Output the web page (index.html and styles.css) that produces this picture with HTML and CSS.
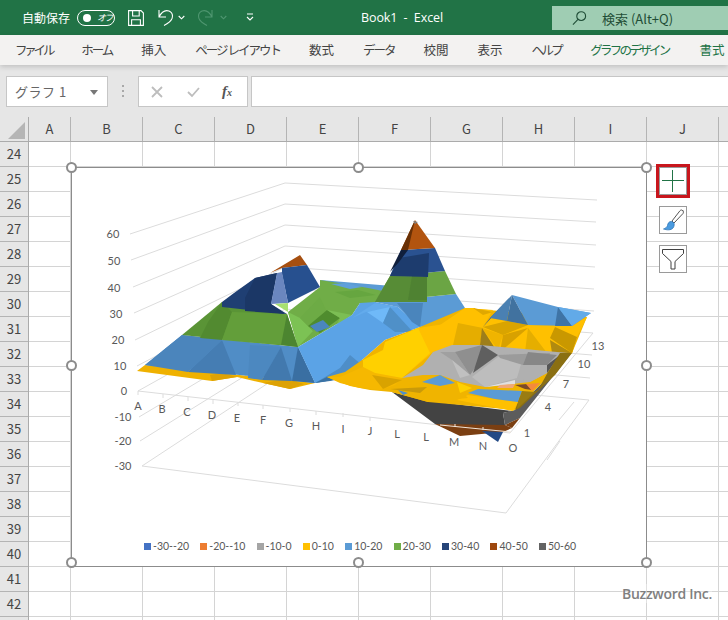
FILE: index.html
```html
<!DOCTYPE html>
<html lang="ja">
<head>
<meta charset="utf-8">
<title>Book1 - Excel</title>
<link rel="stylesheet" href="styles.css">
</head>
<body>
<div class="app">
  <header class="titlebar">
    <span class="autosave">自動保存</span>
    <span class="toggle"><i class="dot"></i><em>オフ</em></span>
    <svg class="qa save" viewBox="0 0 16 16"><path d="M.6.6h12.4l2.4 2.4v12.4H.6zM4.6.6v5.4h6.6V.6M3.6 15.4v-5.6h8.8v5.6"/></svg>
    <svg class="qa undo" viewBox="0 0 17 18"><path d="M2 1v7h7M2 8C5 2 9 1 12 2c3 1.400 4 4.500 3 7.500-1 2.500-4 5-8 7"/></svg>
    <svg class="chev" viewBox="0 0 7 5"><path d="M.7 1l2.800 2.800L6.300 1"/></svg>
    <svg class="qa redo" viewBox="0 0 17 18"><path d="M15 1v7H8M15 8C12 2 8 1 5 2 2 3.400 1 6.500 2 9.500c1 2.500 4 5 8 7"/></svg>
    <svg class="chev dim" viewBox="0 0 7 5"><path d="M.7 1l2.800 2.800L6.300 1"/></svg>
    <svg class="more" viewBox="0 0 8 9"><path d="M1 1h6M1 4l3 3 3-3"/></svg>
    <span class="doc">Book1&nbsp; - &nbsp;Excel</span>
    <div class="search">
      <svg class="lens" viewBox="0 0 16 16"><circle cx="9.800" cy="6" r="4.700"/><path d="M6.400 9.400L1 15"/></svg>
      <span>検索 (Alt+Q)</span>
    </div>
  </header>

  <nav class="tabs">
    <span class="tab k3">ファイル</span>
    <span class="tab k2">ホーム</span>
    <span class="tab">挿入</span>
    <span class="tab k2b">ページ レイアウト</span>
    <span class="tab">数式</span>
    <span class="tab k2">データ</span>
    <span class="tab">校閲</span>
    <span class="tab">表示</span>
    <span class="tab k2h">ヘルプ</span>
    <span class="tab chart-tab k2c">グラフのデザイン</span>
    <span class="tab chart-tab last">書式</span>
  </nav>

  <div class="formula">
    <div class="namebox"><span>グラフ 1</span><i class="caret"></i></div>
    <svg class="grip" viewBox="0 0 3 12"><path d="M0 0h2v2H0zM0 5h2v2H0zM0 10h2v2H0z"/></svg>
    <div class="fxbox">
      <svg class="fx-ic" viewBox="0 0 12 12"><path d="M1 1l10 10M11 1L1 11"/></svg>
      <svg class="fx-ic check" viewBox="0 0 13 12"><path d="M1 6l4 4 7-8"/></svg>
      <span class="fx"><b>f</b><small>x</small></span>
    </div>
    <div class="input"></div>
  </div>

  <div class="colhead">
    <div class="corner"><svg viewBox="0 0 18 17"><path d="M0 17L17 0v17z"/></svg></div>
    <span class="col a">A</span><span class="col">B</span><span class="col">C</span><span class="col">D</span><span class="col">E</span><span class="col">F</span><span class="col">G</span><span class="col">H</span><span class="col">I</span><span class="col">J</span><span class="col"></span>
  </div>

  <div class="body">
    <div class="rows">
      <span>24</span><span>25</span><span>26</span><span>27</span><span>28</span><span>29</span><span>30</span><span>31</span><span>32</span><span>33</span><span>34</span><span>35</span><span>36</span><span>37</span><span>38</span><span>39</span><span>40</span><span>41</span><span>42</span><span></span>
    </div>
    <div class="sheet">
      <div class="chart">
        <svg class="plot" viewBox="71 167 575 399">
          <g class="grid">
            <path d="M285 183L130 234M285 204L131 260M285 225L133 287M285 246L134 313M285 267L135 340M285 288L137 366M285 309L138 391M285 330L139 417M285 351L140 441M285 372L142 466"/>
            <path d="M285 183L597 200M285 204L596 222M285 225L596 245M285 246L595 267M285 267L594 289M285 288L594 311M285 309L593 333M285 330L592 355M285 351L590 378M285 372L589 400"/>
            <path d="M142 466L506 513L589 400M138 391L510 433L593 333M547 460L560 441M559 420L574 402"/>
            <path d="M138 391v4M163 394v4M188 397v4M213 400v4M238 402v4M263 405v4M290 408v4M316 411v4M343 413v4M370 417v4"/>
          </g>
          <g class="surface">
            <!-- back plateau -->
            <polygon fill="#5B9BD5" points="320,280 392,286 386,296 340,292"/>
            <polygon fill="#70AD47" points="288,312 320,287 320,280 345,284 368,288 388,292 375,303 360,303 352,315 298,347"/>
            <polygon fill="#5FA0DC" points="331,284 346,283 362,287 350,289"/>
            <polygon fill="#66A640" points="335,292 358,290 376,295 350,298"/>
            <polygon fill="#7CC254" points="288,312 298,347 313,331 300,318"/>
            <polygon fill="#6DAB45" points="300,318 313,331 326,310 320,297"/>
            <polygon fill="#4F8C2E" points="308,326 327,310 340,318 320,333"/>
            <polygon fill="#7CBE54" points="327,310 352,315 336,326 340,318"/>
            <polygon fill="#4A86BE" points="310,326 323,320 330,327 317,332"/>
            <!-- left slope -->
            <polygon fill="#EFB100" points="137,371 145,365 315,383 290,389 263,383 237,377 212,381"/>
            <polygon fill="#DDA205" points="212,381 237,377 222,373 210,375"/>
            <polygon fill="#DDA205" points="263,383 290,389 304,384 287,379"/>
            <polygon fill="#508DC6" points="145,365 182,335 298,347 315,383"/>
            <polygon fill="#457DB3" points="188,372 222,340 236,375"/>
            <polygon fill="#4B85BC" points="182,335 222,340 188,372 145,365"/>
            <polygon fill="#4C88C0" points="248,378 250,345 281,347 262,380"/>
            <polygon fill="#4279AE" points="262,380 281,347 292,381"/>
            <polygon fill="#3A6FA2" points="292,381 298,347 315,383"/>
            <polygon fill="#5A9436" points="182,335 222,302 287,314 298,347"/>
            <polygon fill="#528A30" points="200,338 208,322 222,302 232,312 222,340"/>
            <polygon fill="#4C8530" points="276,344 287,314 298,347"/>
            <polygon fill="#639E3A" points="222,340 232,312 287,314 281,345"/>
            <!-- left hill -->
            <polygon fill="#A64F10" points="270,273 300,255 307,265 282,268"/>
            <polygon fill="#27508F" points="282,274 282,268 307,265 320,287 288,303"/>
            <polygon fill="#1F3F73" points="222,302 234,293 255,278 277,273 271,304 287,314 222,307"/>
            <polygon fill="#1B3766" points="245,298 255,278 277,273 271,304 285,314 245,311"/>
            <polygon fill="#6A86BF" points="277,273 282,272 288,303 271,304"/>
            <polygon fill="#A8E070" points="275,304 288,303 288,312"/>
            <!-- big light blue -->
            <polygon fill="#5BA3E6" points="298,347 352,315 360,303 375,302 398,307 420,327 385,340 362,360 362,370 350,377 315,383"/>
            <polygon fill="#4E8EC8" points="315,383 325,377 340,368 350,355 362,365 350,377"/>
            <polygon fill="#63ABEC" points="352,318 375,303 398,307 366,312"/>
            <polygon fill="#6FB9F8" points="367,312 390,307 383,323"/>
            <polygon fill="#4F90C8" points="390,307 413,332 395,332 383,323"/>
            <polygon fill="#57A0E0" points="340,375 360,367 373,373 363,376"/>
            <polygon fill="#3A72A4" points="315,383 327,377 350,377 330,381"/>
            <!-- main peak -->
            <polygon fill="#5B9BD5" points="375,302 456,294 465,308 458,322 420,327 398,307"/>
            <polygon fill="#4A85BC" points="397,303 423,303 420,327 412,322"/>
            <polygon fill="#6BA544" points="390,276 445,271 456,294 375,302"/>
            <polygon fill="#578C36" points="390,276 427,277 427,302 375,302"/>
            <polygon fill="#4F8232" points="408,300 412,276 427,277 427,300"/>
            <polygon fill="#2A5291" points="401,250 435,248 445,271 390,276"/>
            <polygon fill="#1D3C6E" points="390,276 399,258 429,253 428,277"/>
            <polygon fill="#101F3C" points="390,272 401,250 408,250 399,262"/>
            <polygon fill="#B2540F" points="415,220 435,248 401,250"/>
            <polygon fill="#683006" points="415,220 401,250 408,250"/>
            <polygon fill="#808080" points="413,221 418,222 415,224"/>
            <!-- underside -->
            <polygon fill="#434343" points="392,392 430,401 513,411 503,413 505,425 458,425 435,424"/>
            <polygon fill="#7B3F12" points="435,424 505,425 512,428 503,432 460,436"/>
            <polygon fill="#5C5C5C" points="570,355 515,410 503,413 505,425 520,418"/>
            <polygon fill="#7A3F12" points="505,425 520,418 512,428"/>
            <polygon fill="#234A86" points="482,431 503,432 498,442"/>
            <!-- yellow base that the facets lie on -->
            <polygon fill="#F0B400" points="362,360 385,340 420,327 465,308 500,311 587,317 572,353 515,410 428,402 392,392 370,390 350,386 327,377 345,372"/>
            <!-- lower yellow and central plain -->
            <polygon fill="#F6B800" points="327,377 340,377 363,367 375,373 402,378 395,385 380,390 360,388 340,383"/>
            <polygon fill="#D9A300" points="372,375 383,389 402,380"/>
            <polygon fill="#FFC000" points="418,328 458,322 465,308 475,308 480,345 453,347 433,352 402,378"/>
            <polygon fill="#FFD000" points="363,360 383,350 385,342 418,328 430,353 402,378 375,373 363,367"/>
            <polygon fill="#FFC000" points="440,325 465,308 493,310 483,327 480,345 452,345 440,350"/>
            <polygon fill="#E5AD00" points="458,323 483,328 480,345 453,345"/>
            <polygon fill="#E0A800" points="473,308 493,312 483,315"/>
            <!-- right hill: yellow band -->
            <polygon fill="#FFC000" points="483,327 490,318 507,321 528,325 572,326 587,317 577,337 572,353 560,354 480,345"/>
            <polygon fill="#F0B400" points="482,328 503,335 498,350"/>
            <polygon fill="#9E7E1A" points="482,328 498,353 480,345"/>
            <polygon fill="#D9A400" points="507,321 528,325 503,335 483,327"/>
            <polygon fill="#D8A100" points="503,335 528,328 500,352"/>
            <polygon fill="#E5AE00" points="528,328 547,353 525,352"/>
            <polygon fill="#C99800" points="555,327 577,337 572,353 550,338"/>
            <polygon fill="#B08A10" points="550,340 572,353 552,353"/>
            <!-- right hill: blue cap -->
            <polygon fill="#5B9BD5" points="512,295 558,307 591,313 572,326 528,325"/>
            <polygon fill="#3A5F88" points="512,295 483,327 490,318"/>
            <polygon fill="#4A80B2" points="512,295 490,318 507,321"/>
            <polygon fill="#41729F" points="512,295 507,321 528,325"/>
            <polygon fill="#3F74A6" points="558,307 572,326 555,326"/>
            <polygon fill="#62AAE8" points="558,307 591,313 572,326"/>
            <!-- grey band -->
            <polygon fill="#B0B0B0" points="402,378 423,365 433,352 452,345 480,345 568,353 547,373 530,382 485,387 460,382 440,375 423,375"/>
            <polygon fill="#A0A0A0" points="440,352 455,352 470,375 452,360"/>
            <polygon fill="#8F8F8F" points="455,352 482,345 477,365 470,375"/>
            <polygon fill="#5F5F5F" points="482,345 498,355 473,373"/>
            <polygon fill="#C0C0C0" points="452,360 470,375 460,378"/>
            <polygon fill="#BDBDBD" points="498,357 523,357 517,378 485,387 472,377"/>
            <polygon fill="#9B9B9B" points="498,355 550,353 547,363 523,365 500,358"/>
            <polygon fill="#878787" points="528,352 557,355 547,365 523,365"/>
            <polygon fill="#B0B0B0" points="523,365 547,365 547,373 530,382 517,378"/>
            <polygon fill="#555555" points="547,365 560,355 547,373"/>
            <polygon fill="#E0E0E0" points="485,387 515,380 515,384"/>
            <polygon fill="#F0A878" points="500,385 515,384 513,388 497,388"/>
            <polygon fill="#7A4A2A" points="515,385 527,384 532,390 525,389"/>
            <polygon fill="#F58A3C" points="526,384 540,383 532,391"/>
            <!-- right edge and front pieces -->
            <polygon fill="#8A6F12" points="560,353 572,353 555,375 520,408 515,410 520,397 538,390 548,372"/>
            <polygon fill="#FFC000" points="457,400 468,395 518,402 513,411"/>
            <polygon fill="#5B9BD5" points="468,393 478,389 522,391 518,402 495,399"/>
            <polygon fill="#9A7C12" points="522,391 535,392 517,409 518,402"/>
            <polygon fill="#F0B400" points="393,388 420,383 457,387 468,398 428,402 392,392"/>
            <polygon fill="#C99A0A" points="390,389 427,387 420,393"/>
            <polygon fill="#5B9BD5" points="422,382 440,375 455,383 440,386"/>
            <polygon fill="#FFD000" points="457,382 472,388 460,393"/>
            <polygon fill="#4F8FCC" points="398,390 408,393 403,395"/>
          </g>
          <path class="axisline" d="M440 425L511 432M455 427v-3M483 430v-3"/>
          <g class="labels">
            <text x="113" y="238">60</text><text x="114" y="265">50</text><text x="114" y="292">40</text><text x="116" y="318">30</text><text x="118" y="344">20</text><text x="120" y="370">10</text><text x="124" y="395">0</text><text x="123" y="421">-10</text><text x="123" y="445">-20</text><text x="123" y="470">-30</text>
            <text x="138" y="410">A</text><text x="162" y="413">B</text><text x="187" y="416">C</text><text x="212" y="419">D</text><text x="237" y="422">E</text><text x="263" y="424">F</text><text x="289" y="427">G</text><text x="316" y="430">H</text><text x="343" y="433">I</text><text x="370" y="435">J</text><text x="397" y="438">L</text><text x="426" y="441">L</text><text x="454" y="446">M</text><text x="483" y="450">N</text><text x="513" y="452">O</text>
            <text x="527" y="437">1</text><text x="548" y="411">4</text><text x="566" y="388">7</text><text x="584" y="368">10</text><text x="598" y="350">13</text>
          </g>
        </svg>
        <ul class="legend">
          <li><i class="s1"></i>-30--20</li><li><i class="s2"></i>-20--10</li><li><i class="s3"></i>-10-0</li><li><i class="s4"></i>0-10</li><li><i class="s5"></i>10-20</li><li><i class="s6"></i>20-30</li><li><i class="s7"></i>30-40</li><li><i class="s8"></i>40-50</li><li><i class="s9"></i>50-60</li>
        </ul>
        <i class="handle h-tl"></i><i class="handle h-tc"></i><i class="handle h-tr"></i>
        <i class="handle h-ml"></i><i class="handle h-mr"></i>
        <i class="handle h-bl"></i><i class="handle h-bc"></i><i class="handle h-br"></i>
      </div>
      <div class="tools">
        <div class="tool plus"><svg viewBox="0 0 22 22"><path d="M0 10.500h22M10.500 0v22"/></svg></div>
        <div class="tool"><svg viewBox="0 0 24 24"><path class="brush-h" d="M21.500 2.500c-.8-.8-1.800-.6-2.500.2L11 13l2 2 9-9.500c.6-.8.600-2.200-.5-3.500z"/><path class="brush-b" d="M10.500 13.500c-3 0-3.500 2-4 4-.4 1.500-2 3-4 3.500 3 1 7.500 1.500 9.500-1 1.500-2 1.500-4.500.5-5.500z"/></svg></div>
        <div class="tool"><svg viewBox="0 0 24 24"><path class="funnel" d="M1.500 2.500h21v4l-8.500 8v7.500h-4v-7.500l-8.500-8z"/></svg></div>
      </div>
      <span class="mark">Buzzword Inc.</span>
    </div>
  </div>
</div>
</body>
</html>
```
FILE: styles.css
```css
*{box-sizing:border-box;margin:0;padding:0}
html,body{width:728px;height:620px;overflow:hidden;background:#fff}
body{font-family:"Noto Sans CJK JP","Noto Sans",sans-serif;color:#444}
.app{width:728px;height:620px;display:flex;flex-direction:column;overflow:hidden}

/* title bar */
.titlebar{height:35px;flex:none;background:#217346;color:#fff;display:flex;align-items:center;position:relative}
.autosave{font-size:12px;margin-left:22px;width:48px;white-space:nowrap;line-height:16px}
.toggle{width:38px;height:16px;margin-left:7px;border:1px solid #fff;border-radius:8px;display:flex;align-items:center;padding-left:5px;flex:none}
.dot{width:8px;height:8px;border-radius:50%;background:#fff;flex:none}
.toggle em{font-size:9px;margin-left:6px;letter-spacing:-1.500px;white-space:nowrap}
svg.qa{fill:none;stroke:#fff;stroke-width:1.100;flex:none}
.save{width:16px;height:16px;margin-left:13px}
.undo{width:17px;height:18px;margin-left:13px}
.chev{width:7px;height:5px;margin-left:4px;fill:none;stroke:#fff;stroke-width:1.100;flex:none}
.chev.dim{stroke:#4f9670;margin-left:6px}
svg.qa.redo{width:17px;height:18px;margin-left:12px;stroke:#4f9670}
.more{width:8px;height:9px;margin-left:19px;fill:none;stroke:#fff;stroke-width:1.100;flex:none}
.doc{font-family:"Open Sans","Noto Sans",sans-serif;font-size:12.500px;margin-left:107px;white-space:nowrap;letter-spacing:-.1px}
.search{position:absolute;left:552px;top:6px;width:176px;height:24px;background:#9fcdb3;color:#1f4d36;display:flex;align-items:center;font-size:13px;padding-left:20px}
.search span{margin-left:15px;font-family:"Noto Sans CJK JP",sans-serif;white-space:nowrap}
.lens{width:15px;height:16px;fill:none;stroke:#1f4d36;stroke-width:1.200;flex:none}

/* tabs */
.tabs{height:30px;flex:none;background:#f3f2f1;display:flex;align-items:center;gap:29px;padding-left:15px;font-size:12.500px;color:#444;white-space:nowrap;box-shadow:0 2px 5px rgba(0,0,0,.16);position:relative;z-index:1;overflow:hidden}
.tab{flex:none;line-height:18px}
.k3{letter-spacing:-3.200px}
.k2{letter-spacing:-2px}
.k2b{letter-spacing:-2px}
.k2h{letter-spacing:-2.600px}
.k2c{letter-spacing:-2.700px}
.last{margin-left:2px}
.chart-tab{color:#217346}

/* formula bar */
.formula{height:52px;flex:none;background:#e6e6e6;display:flex;align-items:flex-start;padding:11px 0 0 6px}
.namebox{width:102px;height:31px;background:#fff;border:1px solid #c6c6c6;display:flex;align-items:center;justify-content:space-between;padding:0 9px 0 8px;font-size:13px;color:#666;letter-spacing:.5px}
.caret{width:0;height:0;border:4px solid transparent;border-top:5px solid #777;margin-top:5px}
.grip{width:3px;height:12px;margin:9px 13px 0 14px;fill:#a8a8a8;flex:none}
.fxbox{width:110px;height:31px;background:#fff;border:1px solid #c6c6c6;display:flex;align-items:center;padding-left:12px;flex:none}
.fx-ic{width:12px;height:12px;fill:none;stroke:#bdbdbd;stroke-width:1.800;flex:none}
.fx-ic.check{width:13px;margin-left:24px}
.fx{font-family:"Liberation Serif",serif;font-style:italic;font-size:15px;margin-left:22px;color:#555;line-height:1}
.fx small{font-size:10px;font-weight:700}
.input{flex:1;height:31px;margin-left:3px;background:#fff;border:1px solid #c6c6c6;border-right:0}

/* column headings */
.colhead{height:25px;flex:none;display:flex;background:#e6e6e6;border-bottom:1px solid #ababab;position:relative}
.corner{width:29px;flex:none;border-right:1px solid #ababab;position:relative;display:flex;align-items:flex-end;justify-content:flex-end;padding:0 2px 2px 0}
.corner svg{width:18px;height:17px;fill:#b5b5b5}
.col{width:72px;flex:none;border-right:1px solid #b4b4b4;text-align:center;font-size:13px;line-height:24px;color:#444}
.col.a{width:42px}

/* body */
.body{flex:1;display:flex;min-height:0}
.rows{width:29px;flex:none;background:#e6e6e6;border-right:1px solid #ababab;display:flex;flex-direction:column}
.rows span{height:25px;flex:none;border-bottom:1px solid #b4b4b4;font-size:13px;line-height:23px;text-align:center;color:#444}
.sheet{flex:1;position:relative;background-color:#fff;background-image:linear-gradient(to right,#d4d4d4 1px,transparent 1px),linear-gradient(to bottom,#d4d4d4 1px,transparent 1px);background-size:72px 25px;background-position:41px 0,0 24px}

/* chart */
.chart{position:absolute;left:42px;top:25px;width:576px;height:400px;background:#fff;border:1px solid #8c8c8c}
.plot{position:absolute;left:-1px;top:-1px;width:575px;height:399px;display:block;overflow:visible}
.grid path{fill:none;stroke:#dcdcdc;stroke-width:1}
.axisline{fill:none;stroke:#f0e6dc;stroke-width:1}
.labels text{font-family:Lato,"Liberation Sans",sans-serif;font-size:11px;fill:#595959;text-anchor:middle}
.legend{position:absolute;left:72px;top:371px;display:flex;gap:11.200px;list-style:none;font-family:Lato,"Liberation Sans",sans-serif;font-size:10.500px;color:#595959;line-height:14px;white-space:nowrap}
.legend li{display:flex;align-items:center;gap:2px}
.legend i{width:7px;height:7px;flex:none}
.s1{background:#4472c4}.s2{background:#ed7d31}.s3{background:#a5a5a5}.s4{background:#ffc000}.s5{background:#5b9bd5}.s6{background:#70ad47}.s7{background:#264478}.s8{background:#9e480e}.s9{background:#636363}
.handle{position:absolute;width:11px;height:11px;border-radius:50%;background:#fff;border:2px solid #8c8c8c}
.h-tl{left:-6px;top:-6px}.h-tc{left:281px;top:-6px}.h-tr{left:569px;top:-6px}
.h-ml{left:-6px;top:192px}.h-mr{left:569px;top:192px}
.h-bl{left:-6px;top:389px}.h-bc{left:281px;top:389px}.h-br{left:569px;top:389px}

/* chart tools */
.tools{position:absolute;left:630px;top:25px;display:flex;flex-direction:column;gap:11px}
.tool{width:28px;height:28px;border:1px solid #9a9a9a;background:#fff;display:flex;align-items:center;justify-content:center}
.tool svg{width:24px;height:24px}
.tool.plus{outline:3px solid #c8161d;outline-offset:0;width:28px;height:28px}
.tool.plus svg{width:22px;height:22px;fill:none;stroke:#217346;stroke-width:1}
.brush-h{fill:#fff;stroke:#555;stroke-width:1}
.brush-b{fill:#4a9be0;stroke:#2e75b6;stroke-width:.8}
.funnel{fill:#fff;stroke:#404040;stroke-width:1}
.mark{position:absolute;left:593px;top:442px;font-family:"Open Sans","Noto Sans",sans-serif;font-size:14px;font-weight:600;color:#808080;letter-spacing:-.3px;white-space:nowrap;background:rgba(255,255,255,.3)}
```
